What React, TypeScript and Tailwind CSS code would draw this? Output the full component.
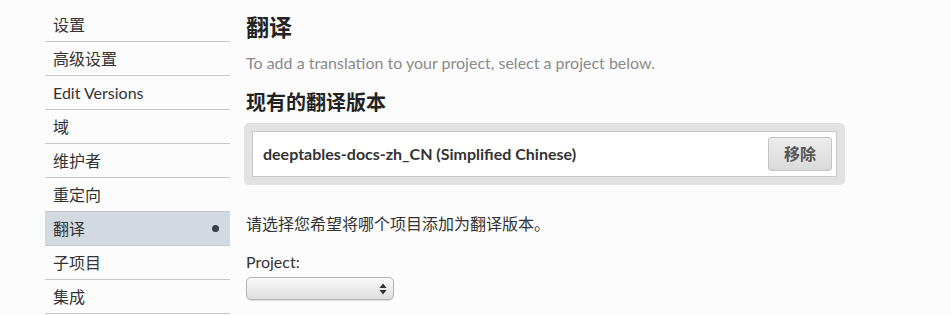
const navItems = ['设置', '高级设置', 'Edit Versions', '域', '维护者', '重定向', '翻译', '子项目', '集成'];

const font = { fontFamily: 'Lato, "Noto Sans CJK SC", sans-serif' };

function Sidebar() {
  return (
    <ul className="w-[185px] pt-2 shrink-0">
      {navItems.map((item) => {
        const active = item === '翻译';
        return (
          <li
            key={item}
            className={`h-[34px] border-b border-[#c8c8c8] px-2 flex items-center justify-between text-[16px] text-[#333] ${
              active ? 'bg-[#d3d9e0]' : ''
            }`}
          >
            <span>{item}</span>
            {active && <span className="w-[7px] h-[7px] rounded-full bg-[#3a3f45] mr-[3px]" />}
          </li>
        );
      })}
    </ul>
  );
}

function SelectBox() {
  return (
    <div className="mt-[5px] w-[148px] h-[23px] rounded-[5px] border border-[#b5b5b5] bg-gradient-to-b from-[#fafafa] to-[#dedede] shadow-[0_1px_1px_rgba(0,0,0,0.12)] flex items-center justify-end pr-[6px]">
      <svg width="8" height="12" viewBox="0 0 8 12">
        <path d="M4 0.5 L7.5 5 L0.5 5 Z" fill="#333" />
        <path d="M4 11.5 L7.5 7 L0.5 7 Z" fill="#333" />
      </svg>
    </div>
  );
}

export default function App() {
  return (
    <div className="w-[951px] h-[315px] bg-[#fcfcfc] text-[#333] flex pl-[45px] overflow-hidden" style={font}>
      <Sidebar />
      <main className="ml-4 w-[600px]">
        <h1 className="mt-[13px] text-[23px] leading-[28px] font-bold text-[#222]">翻译</h1>
        <p className="mt-3 text-[16px] leading-5 text-[#8a8a8a]">
          To add a translation to your project, select a project below.
        </p>
        <h2 className="mt-4 text-[20px] leading-[26px] font-bold text-[#222]">现有的翻译版本</h2>
        <div className="mt-2 -ml-[2px] w-[601px] rounded-[5px] bg-[#e2e2e2] p-2">
          <div className="h-[46px] bg-white border border-[#c9c9c9] flex items-center justify-between pl-[10px] pr-[4px]">
            <span className="text-[16px] font-bold text-[#333]">deeptables-docs-zh_CN (Simplified Chinese)</span>
            <button className="w-[64px] h-[34px] rounded-[3px] border border-[#c4c4c4] bg-gradient-to-b from-[#ececec] to-[#dadada] text-[16px] font-bold text-[#555]">
              移除
            </button>
          </div>
        </div>
        <p className="mt-[29px] text-[16px] leading-5">请选择您希望将哪个项目添加为翻译版本。</p>
        <label className="block mt-[18px] text-[16px] leading-5">Project:</label>
        <SelectBox />
      </main>
    </div>
  );
}
